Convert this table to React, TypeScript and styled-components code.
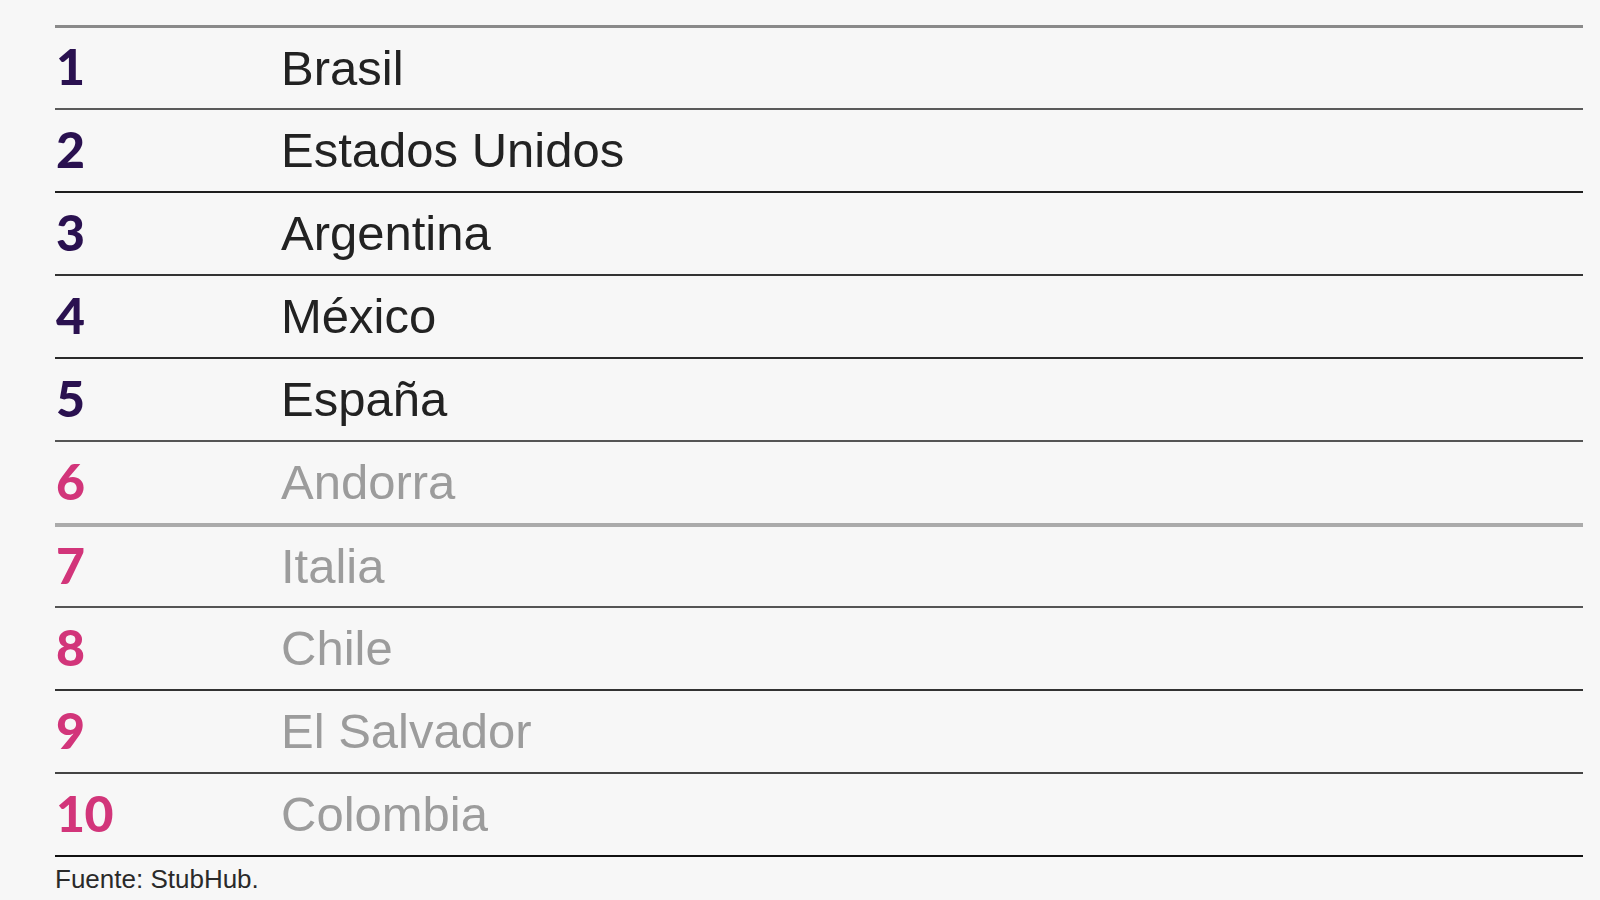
import React from "react";
import styled, { createGlobalStyle } from "styled-components";

const Global = createGlobalStyle`
  html, body { margin: 0; padding: 0; background: #f7f7f7; }
  body { font-family: "Liberation Sans", Arial, sans-serif; }
`;

const Page = styled.div`
  width: 1600px;
  height: 900px;
  box-sizing: border-box;
  padding: 25px 17px 0 55px;
  background: #f7f7f7;
  overflow: hidden;
`;

const List = styled.ol`
  list-style: none;
  margin: 0;
  padding: 0;
  border-bottom: 2px solid #111;
`;

const Row = styled.li<{ $line: string; $thick: number }>`
  display: grid;
  grid-template-columns: 226px 1fr;
  align-items: center;
  height: 83px;
  box-sizing: border-box;
  border-top: ${(p) => p.$thick}px solid ${(p) => p.$line};
`;

const Rank = styled.span<{ $muted: boolean }>`
  font-family: Lato, "Liberation Sans", sans-serif;
  font-weight: 900;
  font-size: 50px;
  line-height: 1;
  padding: 0 0 4px 1px;
  letter-spacing: -0.5px;
  color: ${(p) => (p.$muted ? "#d2357a" : "#2a1150")};
`;

const Country = styled.span<{ $muted: boolean }>`
  font-family: "Liberation Sans", Arial, sans-serif;
  font-size: 49px;
  line-height: 1;
  color: ${(p) => (p.$muted ? "#9c9c9c" : "#222222")};
`;

const Source = styled.p`
  margin: 7px 0 0 0;
  font-family: "Liberation Sans", Arial, sans-serif;
  font-size: 26px;
  letter-spacing: 0;
  color: #2a2a2a;
`;

const rows: { name: string; line: string; thick: number }[] = [
  { name: "Brasil", line: "#8a8a8a", thick: 3 },
  { name: "Estados Unidos", line: "#5a5a5a", thick: 2 },
  { name: "Argentina", line: "#1e1e1e", thick: 2 },
  { name: "México", line: "#333333", thick: 2 },
  { name: "España", line: "#2a2a2a", thick: 2 },
  { name: "Andorra", line: "#555555", thick: 2 },
  { name: "Italia", line: "#ababab", thick: 4 },
  { name: "Chile", line: "#555555", thick: 2 },
  { name: "El Salvador", line: "#333333", thick: 2 },
  { name: "Colombia", line: "#444444", thick: 2 },
];

export default function App() {
  return (
    <>
      <Global />
      <Page>
        <List>
          {rows.map((r, i) => (
            <Row key={r.name} $line={r.line} $thick={r.thick}>
              <Rank $muted={i >= 5}>{i + 1}</Rank>
              <Country $muted={i >= 5}>{r.name}</Country>
            </Row>
          ))}
        </List>
        <Source>Fuente: StubHub.</Source>
      </Page>
    </>
  );
}
